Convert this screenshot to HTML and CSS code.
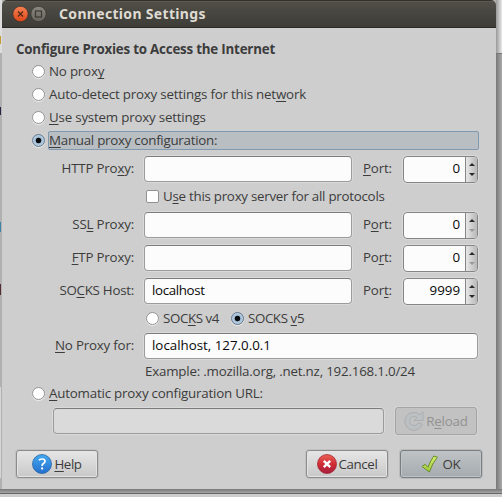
FILE: index.html
```html
<!DOCTYPE html>
<html lang="en">
<head>
<meta charset="utf-8">
<title>Connection Settings</title>
<link rel="stylesheet" href="styles.css">
</head>
<body>
<div class="backdrop" aria-hidden="true"><i class="b1"></i><i class="b2"></i><i class="b3"></i><i class="b4"></i><i class="b5"></i><i class="b6"></i><i class="b7"></i><i class="b8"></i><i class="b9"></i></div>
<main class="window">
  <header class="titlebar">
    <svg class="controls" width="36" height="18" viewBox="0 0 36 18">
      <defs>
        <linearGradient id="orange" x2="0" y2="1"><stop stop-color="#f68154"/><stop offset="1" stop-color="#dd4717"/></linearGradient>
        <linearGradient id="grey" x2="0" y2="1"><stop stop-color="#8b897f"/><stop offset="1" stop-color="#65635b"/></linearGradient>
      </defs>
      <circle cx="8.5" cy="9" r="7.7" fill="url(#orange)" stroke="#32312d" stroke-width=".7"/>
      <path d="M6 6.5l5 5m0-5l-5 5" stroke="#52281b" stroke-width="1.3"/>
      <circle cx="26.5" cy="9" r="7.7" fill="url(#grey)" stroke="#32312d" stroke-width=".7"/>
      <rect x="23.5" y="6" width="6" height="6" fill="none" stroke="#3b3a35" stroke-width="1.2"/>
    </svg>
    <h1 class="t-title">Connection Settings</h1>
  </header>
  <form class="content">
    <h2 class="t-head">Configure Proxies to Access the Internet</h2>
    <div class="option"><i class="radio"></i><span class="t-no">No prox<u>y</u></span></div>
    <div class="option"><i class="radio"></i><span class="t-auto">Auto-detect proxy settings for this net<u>w</u>ork</span></div>
    <div class="option"><i class="radio"></i><span class="t-sys"><u>U</u>se system proxy settings</span></div>
    <div class="option"><i class="radio on"></i><div class="focus"><span class="t-man"><u>M</u>anual proxy configuration:</span></div></div>

    <div class="row http"><label>HTTP Pro<u>x</u>y:</label><div class="field"></div><span class="port"><u>P</u>ort:</span><div class="spin"><b>0</b><i class="arrows"></i></div></div>
    <div class="check"><i class="box"></i><span class="t-check">U<u>s</u>e this proxy server for all protocols</span></div>
    <div class="row"><label>SS<u>L</u> Proxy:</label><div class="field"></div><span class="port">P<u>o</u>rt:</span><div class="spin"><b>0</b><i class="arrows min"></i></div></div>
    <div class="row next"><label><u>F</u>TP Proxy:</label><div class="field"></div><span class="port">Po<u>r</u>t:</span><div class="spin"><b>0</b><i class="arrows min"></i></div></div>
    <div class="row next"><label class="t-socks">SO<u>C</u>KS Host:</label><div class="field t-host">localhost</div><span class="port">Por<u>t</u>:</span><div class="spin"><b>9999</b><i class="arrows"></i></div></div>
    <div class="versions"><i class="radio"></i><span>SOC<u>K</u>S v4</span><i class="radio on"></i><span>SOCKS <u>v</u>5</span></div>
    <div class="row"><label><u>N</u>o Proxy for:</label><div class="field wide"><span class="t-local">localhost, 127.0.0.1</span></div></div>
    <div class="example"><span class="t-ex">Example: .mozilla.org, .net.nz, 192.168.1.0/24</span></div>
    <div class="option url"><i class="radio"></i><span class="t-url"><u>A</u>utomatic proxy configuration URL:</span></div>
    <div class="reload-row">
      <div class="field disabled"></div>
      <div class="button off">
        <svg width="20" height="20" viewBox="0 0 20 20"><path d="M15.8 3.6A9 9 0 1 0 18.4 13.2L14.2 11.8A4.5 4.5 0 1 1 13 6.6L9.8 9.5H19V.8z" fill="#bcc0c2" stroke="#a6aaad" stroke-width=".8" stroke-linejoin="round"/></svg>
        <span>R<u>e</u>load</span>
      </div>
    </div>
    <footer>
      <div class="button help">
        <svg width="20" height="20" viewBox="0 0 20 20"><defs><linearGradient id="blue" x2="0" y2="1"><stop stop-color="#45aaf0"/><stop offset="1" stop-color="#246fcd"/></linearGradient></defs><circle cx="10" cy="10" r="9.5" fill="url(#blue)" stroke="#2866a4" stroke-width=".8"/><path d="M7 6.3Q7.8 5 10 5Q13 5 13 7.2Q13 8.6 11.4 9.5Q10.1 10.3 10.1 12" fill="none" stroke="#fff" stroke-width="1.7"/><circle cx="10.1" cy="14.5" r="1.15" fill="#fff"/></svg>
        <span><u>H</u>elp</span>
      </div>
      <div class="button cancel">
        <svg width="20" height="20" viewBox="0 0 20 20"><defs><linearGradient id="red" x2="0" y2="1"><stop stop-color="#ec6258"/><stop offset=".5" stop-color="#d12d35"/><stop offset="1" stop-color="#a51f40"/></linearGradient></defs><circle cx="10" cy="10" r="9.5" fill="url(#red)" stroke="#a32830" stroke-width=".8"/><path d="M6.8 6.8l6.4 6.4m0-6.4l-6.4 6.4" stroke="#fff" stroke-width="2.4"/></svg>
        <span>Cancel</span>
      </div>
      <div class="button ok">
        <svg width="18" height="18" viewBox="0 0 18 18"><defs><linearGradient id="green" x2="0" y2="1"><stop stop-color="#d7ec74"/><stop offset="1" stop-color="#9fcb38"/></linearGradient></defs><path d="M1 11.5l3.2-2.2 2.7 3Q9.7 5.2 12.8 1l3.6 1.1Q11.3 8.5 8.3 17z" fill="url(#green)" stroke="#688e29" stroke-linejoin="round"/></svg>
        <span>OK</span>
      </div>
    </footer>
  </form>
</main>
</body>
</html>
```
FILE: styles.css
```css
* { box-sizing: border-box; }
html, body { margin: 0; height: 100%; overflow: hidden; }
body { background: #b1b1b1; font: 13.33px/18px "Open Sans", sans-serif; letter-spacing: -.2px; color: #3c3c3c; padding-left: 2px; }
.backdrop i { position: absolute; display: block; }
.b1 { left: 496px; top: 0; width: 6px; height: 53px; background: linear-gradient(90deg, #999, #e8e8e8); }
.b2 { left: 496px; top: 53px; width: 6px; height: 444px; background: linear-gradient(90deg, #777, #aaa); border-top: 1px solid #777; }
.b3 { left: 0; top: 489px; width: 502px; height: 8px; background: linear-gradient(#777, #a5a5a5 4px, #666 4px, #666 5px, #ccc 5px); }
.b4 { left: 0; top: 0; width: 2px; height: 53px; background: #ddd; }
.b5 { left: 0; top: 36px; width: 1px; height: 8px; background: #c69a35; }
.b6 { left: 0; top: 107px; width: 1px; height: 8px; background: #282344; }
.b7 { left: 0; top: 222px; width: 1px; height: 10px; background: #3d83a5; }
.b8 { left: 0; top: 284px; width: 1px; height: 11px; background: #542d32; }
.b9 { left: 0; top: 387px; width: 1px; height: 91px; background: #d6d6d6; }
.window { position: relative; width: 494px; height: 489px; background: #cecece; border-radius: 5px 5px 0 0; overflow: hidden; }
h1, h2 { margin: 0; white-space: nowrap; }
.titlebar { height: 28px; display: flex; align-items: center; padding: 0 0 0 10px; gap: 11px; background: linear-gradient(#33322e 0, #33322e 1px, #66645b 1px, #504e47 2px, #3d3c37 27px, #292825 27px); }
h1 { color: #dfdbd2; font: 700 14px/20px "Noto Sans", sans-serif; letter-spacing: .32px; }
h2 { height: 32px; padding-top: 12px; font-size: 13.33px; line-height: 18px; }
.content { padding: 0 14px; }
span, label, .field { white-space: nowrap; }
.t-check, .t-man { letter-spacing: -.26px; }
.t-socks { letter-spacing: -.26px; }
.t-host { letter-spacing: -.35px; }
.t-local, .spin { letter-spacing: 0; }
u { text-decoration: underline; text-decoration-thickness: 1px; text-underline-offset: 2px; text-decoration-skip-ink: none; }
.option { display: flex; align-items: center; height: 23px; padding-left: 16px; }
.option > span { margin-left: 4px; }
.radio { flex: none; width: 13px; height: 13px; border-radius: 50%; border: 1px solid #929292; background: #fff; box-shadow: 0 1px 1px #eee; }
.radio.on { border-color: #617a91; background: radial-gradient(circle, #080b0e 0 2.4px, #a3bed6 3.2px, #bfd0df 6px); }
.focus { width: 431px; height: 19px; margin-left: 3px; border: 1px solid #7f99b0; border-radius: 2px; background: #b8bec2; line-height: 17px; }
.row { display: flex; align-items: center; height: 26px; }
.row.http { margin-top: 4px; }
.row.next { margin-top: 7px; }
label { width: 118px; text-align: right; margin-right: 10px; }
.option > span, .check span, .versions span { padding-bottom: 1px; }
.row label, .port { padding-bottom: 2px; }
.field { flex: none; width: 208px; height: 26px; padding: 2px 7px; background: #fcfcfc; border: 1px solid #9b9b9b; border-top-color: #7c7c7c; border-radius: 4px; box-shadow: 0 0 0 1px #dadada; color: #080808; }
.wide { width: 334px; }
.port { width: 40px; margin-left: 11px; }
.spin { display: flex; width: 75px; height: 27px; border: 1px solid #858585; border-radius: 4px; background: #fcfcfc; box-shadow: 0 0 0 1px #dadada; color: #080808; overflow: hidden; }
.spin b { flex: 1; text-align: right; font-weight: 400; padding: 2px 5px 0 0; }
.arrows { width: 12px; border-left: 1px solid #858585; background: linear-gradient(90deg, #e7e7e7, #b8b8b8); display: flex; flex-direction: column; align-items: center; justify-content: center; gap: 7px; }
.arrows::before, .arrows::after { content: ""; border: 3px solid transparent; }
.arrows::before { border-top: 0; border-bottom: 3px solid #292929; }
.arrows::after { border-bottom: 0; border-top: 3px solid #292929; }
.arrows.min::after { border-top-color: #999; }
.check { display: flex; align-items: center; height: 30px; padding: 0 0 1px 130px; gap: 4px; }
.box { width: 13px; height: 13px; border: 1px solid #929292; border-radius: 2px; background: #fff; }
.versions { height: 29px; display: flex; align-items: center; padding-left: 130px; letter-spacing: -.4px; }
.versions span { margin-left: 4px; width: 68px; }
.example { height: 26px; padding: 3px 0 0 129px; }
.option.url { height: 17px; }
.reload-row { display: flex; align-items: center; height: 28px; margin-top: 5px; padding-left: 37px; gap: 11px; }
.field.disabled { width: 331px; background: #dadada; }
.button { display: flex; align-items: center; justify-content: center; gap: 2px; width: 82px; height: 28px; border: 1px solid #8c8c8c; border-radius: 3px; background: linear-gradient(#e6e6e6, #c8c8c8); box-shadow: inset 0 0 0 1px #e3e3e3, 0 0 0 1px #c1c1c1; }
.button svg { flex: none; }
.button.off { background: #c2c2c2; border-color: #a4a4a4; box-shadow: 0 0 0 1px #d5d5d5; color: #929292; }
.help, .cancel { letter-spacing: -.4px; }
footer { display: flex; margin-top: 15px; }
.cancel { margin-left: 208px; }
.ok { margin-left: 12px; gap: 3px; background: linear-gradient(#bfc3c6, #a5abaf); border-color: #777f84; box-shadow: inset 0 0 0 1px #bfc3c6, 0 0 0 1px #bbb; }
```
